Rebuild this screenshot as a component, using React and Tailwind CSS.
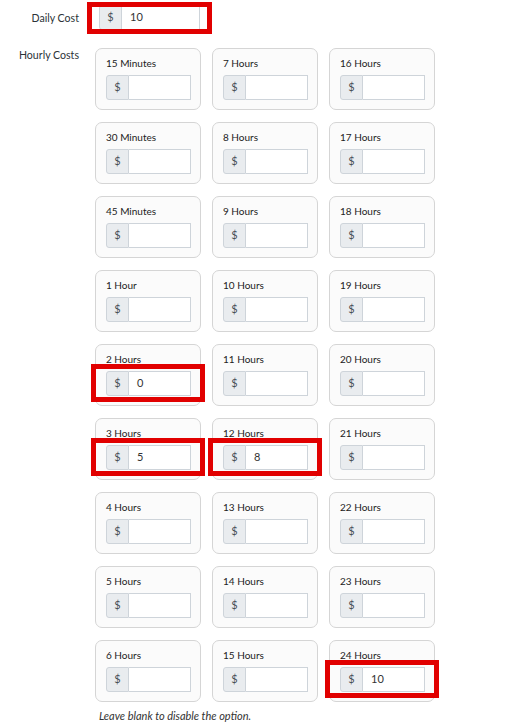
import React from "react";

const slots = [
  ["15 Minutes", "7 Hours", "16 Hours"],
  ["30 Minutes", "8 Hours", "17 Hours"],
  ["45 Minutes", "9 Hours", "18 Hours"],
  ["1 Hour", "10 Hours", "19 Hours"],
  ["2 Hours", "11 Hours", "20 Hours"],
  ["3 Hours", "12 Hours", "21 Hours"],
  ["4 Hours", "13 Hours", "22 Hours"],
  ["5 Hours", "14 Hours", "23 Hours"],
  ["6 Hours", "15 Hours", "24 Hours"],
];

const values = { "2 Hours": "0", "3 Hours": "5", "12 Hours": "8", "24 Hours": "10" };

const PriceInput = ({ value, width }) => (
  <div className={`flex h-[25px] text-[11px] ${width}`}>
    <span className="flex w-[23px] items-center justify-center rounded-l-[3px] border border-[#ced4da] bg-[#e9ecef] text-[#495057]">
      $
    </span>
    <div className="flex flex-1 items-center border border-l-0 border-[#ced4da] bg-white pl-[8px] text-[#333]">
      {value}
    </div>
  </div>
);

const Marked = ({ children, className }) => (
  <div className="relative">
    {children}
    <div className={`pointer-events-none absolute border-[5px] border-[#e10000] ${className}`}></div>
  </div>
);

const Card = ({ label }) => {
  const value = values[label] || "";
  const input = <PriceInput value={value} width="w-[85px]" />;
  return (
    <div className="h-[62px] w-[106px] rounded-[7px] border border-[#d5d5d5] bg-[#fbfbfb] px-[10px] pt-[7px]">
      <div className="mb-[5px] h-[14px] text-[10px] leading-[14px] text-[#222]">{label}</div>
      {value ? (
        <Marked className="-left-[15px] -right-[15px] -top-[7px] -bottom-[6px]">{input}</Marked>
      ) : (
        input
      )}
    </div>
  );
};

const App = () => {
  return (
    <div
      className="min-h-screen bg-white text-[10.6px] text-[#2c3338]"
      style={{ fontFamily: '"Segoe UI", Lato, sans-serif' }}
    >
      <div className="grid grid-cols-[79px_1fr] gap-x-[16px] pt-[5px]">
        <div className="flex h-[27px] items-center justify-end">Daily Cost</div>
        <div className="pl-[4px]">
          <Marked className="-left-[12px] -right-[12px] -top-[3px] -bottom-[4px] w-[125px]">
            <PriceInput value="10" width="w-[101px]" />
          </Marked>
        </div>

        <div className="pt-[16px] text-right leading-[14px]">Hourly Costs</div>
        <div className="pt-[16px]">
          <div className="grid w-max grid-cols-[106px_106px_106px] gap-x-[11px] gap-y-[12px]">
            {slots.flat().map((label) => (
              <Card key={label} label={label} />
            ))}
          </div>
          <p className="mt-[6px] pl-[4px] text-[11px] italic text-[#333]">Leave blank to disable the option.</p>
        </div>
      </div>
    </div>
  );
};

export default App;
